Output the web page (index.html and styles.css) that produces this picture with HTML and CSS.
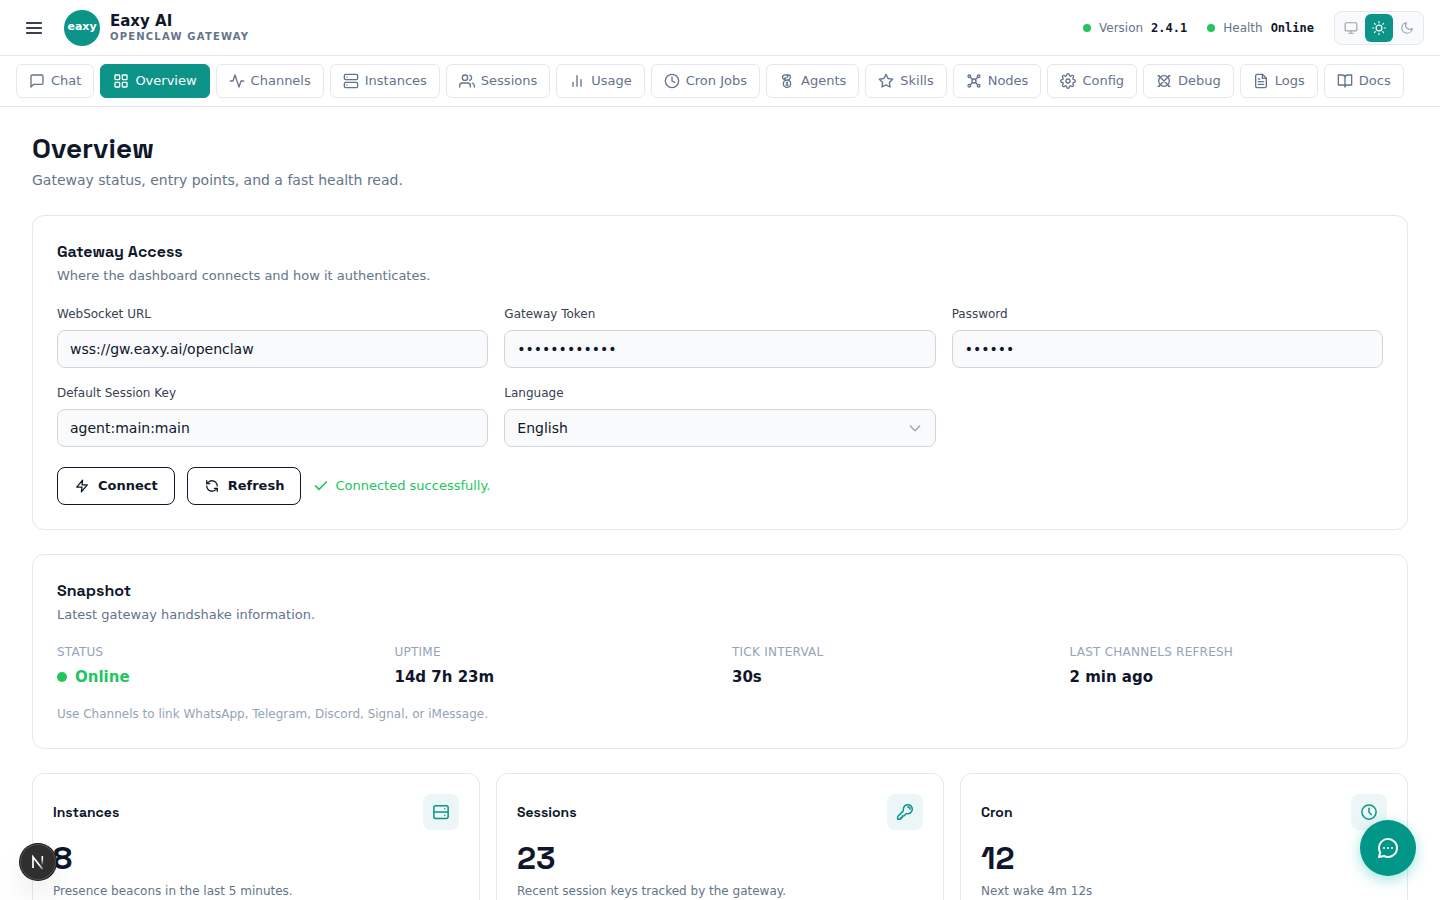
FILE: index.html
```html
<!DOCTYPE html>
<html lang="en">
<head>
    <meta charset="UTF-8">
    <meta name="viewport" content="width=device-width, initial-scale=1.0">
    <title>Eaxy AI - Overview</title>
    <link rel="stylesheet" href="styles.css">
</head>
<body>
    <header class="topbar">
        <div class="brand">
            <button class="menu-btn" type="button" aria-label="Menu">
                <svg class="icon icon-lg" viewBox="0 0 24 24"><path d="M3.500 6h17M3.500 12h17M3.500 18h17"/></svg>
            </button>
            <div class="logo">eaxy</div>
            <div>
                <div class="brand-name">Eaxy AI</div>
                <div class="brand-sub">OPENCLAW GATEWAY</div>
            </div>
        </div>
        <div class="topbar-right">
            <div class="pill"><span class="dot"></span>Version <b>2.4.1</b></div>
            <div class="pill"><span class="dot"></span>Health <b>Online</b></div>
            <div class="theme">
                <button type="button" aria-label="System theme"><svg class="icon icon-sm" viewBox="0 0 24 24"><rect x="2" y="3" width="20" height="14" rx="2"/><path d="M8 21h8M12 17v4"/></svg></button>
                <button type="button" class="active" aria-label="Light theme"><svg class="icon icon-sm" viewBox="0 0 24 24"><circle cx="12" cy="12" r="5"/><path d="M12 1v2M12 21v2M4.220 4.220l1.420 1.420M18.360 18.360l1.420 1.420M1 12h2M21 12h2M4.220 19.780l1.420-1.420M18.360 5.640l1.420-1.420"/></svg></button>
                <button type="button" aria-label="Dark theme"><svg class="icon icon-sm" viewBox="0 0 24 24"><path d="M21 12.790A9 9 0 1 1 11.210 3 7 7 0 0 0 21 12.790z"/></svg></button>
            </div>
        </div>
    </header>

    <nav class="tabs">
        <a href="#chat"><svg class="icon" viewBox="0 0 24 24"><path d="M21 15a2 2 0 0 1-2 2H7l-4 4V5a2 2 0 0 1 2-2h14a2 2 0 0 1 2 2z"/></svg>Chat</a>
        <a href="#overview" class="active"><svg class="icon" viewBox="0 0 24 24"><rect x="3" y="3" width="7" height="7" rx="1"/><rect x="14" y="3" width="7" height="7" rx="1"/><rect x="14" y="14" width="7" height="7" rx="1"/><rect x="3" y="14" width="7" height="7" rx="1"/></svg>Overview</a>
        <a href="#channels"><svg class="icon" viewBox="0 0 24 24"><path d="M22 12h-4l-3 9L9 3l-3 9H2"/></svg>Channels</a>
        <a href="#instances"><svg class="icon" viewBox="0 0 24 24"><rect x="2" y="2" width="20" height="8" rx="2"/><rect x="2" y="14" width="20" height="8" rx="2"/><path d="M6 6h.01M6 18h.01"/></svg>Instances</a>
        <a href="#sessions"><svg class="icon" viewBox="0 0 24 24"><path d="M17 21v-2a4 4 0 0 0-4-4H5a4 4 0 0 0-4 4v2"/><circle cx="9" cy="7" r="4"/><path d="M23 21v-2a4 4 0 0 0-3-3.870M16 3.130a4 4 0 0 1 0 7.750"/></svg>Sessions</a>
        <a href="#usage"><svg class="icon" viewBox="0 0 24 24"><path d="M18 20V10M12 20V4M6 20v-6"/></svg>Usage</a>
        <a href="#cron"><svg class="icon" viewBox="0 0 24 24"><circle cx="12" cy="12" r="10"/><path d="M12 6v6l4 2"/></svg>Cron Jobs</a>
        <a href="#agents"><svg class="icon" viewBox="0 0 24 24"><path d="M9 9.500H8A3 3 0 0 1 6.500 4 3 3 0 0 1 10 3h4a3 3 0 0 1 2.500 5L14.500 10.500"/><path d="M10.500 6.500a2 2 0 0 1-3 1.500M13 3.500v3"/><circle cx="12" cy="16" r="5.500"/><path d="M11 14h2M12 14v4M10.500 18h3"/></svg>Agents</a>
        <a href="#skills"><svg class="icon" viewBox="0 0 24 24"><path d="M12 2l3.090 6.260L22 9.270l-5 4.870 1.180 6.880L12 17.770l-6.180 3.250L7 14.140 2 9.270l6.910-1.010z"/></svg>Skills</a>
        <a href="#nodes"><svg class="icon" viewBox="0 0 24 24"><circle cx="5" cy="5" r="2"/><circle cx="19" cy="5" r="2"/><circle cx="5" cy="19" r="2"/><circle cx="19" cy="19" r="2"/><circle cx="12" cy="12" r="3"/><path d="M6.500 6.500l3.300 3.300M17.500 6.500l-3.300 3.300M6.500 17.500l3.300-3.300M17.500 17.500l-3.300-3.300"/></svg>Nodes</a>
        <a href="#config"><svg class="icon" viewBox="0 0 24 24"><circle cx="12" cy="12" r="3"/><path d="M19.400 15a1.650 1.650 0 0 0 .33 1.820l.06.06a2 2 0 1 1-2.830 2.830l-.06-.06a1.650 1.650 0 0 0-2.800 1.180V21a2 2 0 0 1-4 0v-.09a1.650 1.650 0 0 0-2.900-1.200l-.06.06a2 2 0 1 1-2.830-2.830l.06-.06A1.650 1.650 0 0 0 3.090 14H3a2 2 0 0 1 0-4h.09a1.650 1.650 0 0 0 1.200-2.900l-.06-.06a2 2 0 1 1 2.830-2.830l.06.06A1.650 1.650 0 0 0 10 3.090V3a2 2 0 0 1 4 0v.09a1.650 1.650 0 0 0 2.900 1.200l.06-.06a2 2 0 1 1 2.830 2.830l-.06.06A1.650 1.650 0 0 0 20.910 10H21a2 2 0 0 1 0 4h-.09a1.650 1.650 0 0 0-1.510 1z"/></svg>Config</a>
        <a href="#debug"><svg class="icon" viewBox="0 0 24 24"><circle cx="12" cy="12" r="8"/><path d="M4 4l16 16M20 4L4 20M3 4h2M19 4h2M3 20h2M19 20h2"/></svg>Debug</a>
        <a href="#logs"><svg class="icon" viewBox="0 0 24 24"><path d="M14 2H6a2 2 0 0 0-2 2v16a2 2 0 0 0 2 2h12a2 2 0 0 0 2-2V8z"/><path d="M14 2v6h6M16 13H8M16 17H8M10 9H8"/></svg>Logs</a>
        <a href="#docs"><svg class="icon" viewBox="0 0 24 24"><path d="M2 3h6a4 4 0 0 1 4 4v14a3 3 0 0 0-3-3H2zM22 3h-6a4 4 0 0 0-4 4v14a3 3 0 0 1 3-3h7z"/></svg>Docs</a>
    </nav>

    <main>
        <h1>Overview</h1>
        <p class="lead">Gateway status, entry points, and a fast health read.</p>

        <section class="card">
            <h2>Gateway Access</h2>
            <p class="card-sub">Where the dashboard connects and how it authenticates.</p>
            <form>
                <div class="fields">
                    <div class="field">
                        <label for="ws">WebSocket URL</label>
                        <input id="ws" type="text" value="wss://gw.eaxy.ai/openclaw">
                    </div>
                    <div class="field">
                        <label for="token">Gateway Token</label>
                        <input id="token" type="password" value="tokentokenab" autocomplete="off">
                    </div>
                    <div class="field">
                        <label for="password">Password</label>
                        <input id="password" type="password" value="secret" autocomplete="off">
                    </div>
                    <div class="field">
                        <label for="session">Default Session Key</label>
                        <input id="session" type="text" value="agent:main:main">
                    </div>
                    <div class="field">
                        <label for="lang">Language</label>
                        <div class="select">
                            <select id="lang"><option>English</option></select>
                            <svg class="icon" viewBox="0 0 24 24"><path d="M5 9l7 7 7-7"/></svg>
                        </div>
                    </div>
                </div>
                <div class="actions">
                    <button class="btn" type="button"><svg class="icon icon-sm" viewBox="0 0 24 24"><path d="M13 2L3 14h9l-1 8 10-12h-9z"/></svg>Connect</button>
                    <button class="btn" type="button"><svg class="icon icon-sm" viewBox="0 0 24 24"><path d="M21 12a9 9 0 0 0-9-9 9.750 9.750 0 0 0-6.740 2.740L3 8"/><path d="M3 3v5h5M3 12a9 9 0 0 0 9 9 9.750 9.750 0 0 0 6.740-2.740L21 16"/><path d="M16 16h5v5"/></svg>Refresh</button>
                    <span class="success"><svg class="icon" viewBox="0 0 24 24"><path d="M20 6L9 17l-5-5"/></svg>Connected successfully.</span>
                </div>
            </form>
        </section>

        <section class="card">
            <h2>Snapshot</h2>
            <p class="card-sub">Latest gateway handshake information.</p>
            <dl class="stats">
                <div><dt>STATUS</dt><dd class="online"><span class="dot"></span>Online</dd></div>
                <div><dt>UPTIME</dt><dd>14d 7h 23m</dd></div>
                <div><dt>TICK INTERVAL</dt><dd>30s</dd></div>
                <div><dt>LAST CHANNELS REFRESH</dt><dd>2 min ago</dd></div>
            </dl>
            <p class="hint">Use Channels to link WhatsApp, Telegram, Discord, Signal, or iMessage.</p>
        </section>

        <div class="tiles">
            <section class="tile">
                <div class="tile-head">
                    <h3>Instances</h3>
                    <span class="tile-icon"><svg class="icon" viewBox="0 0 24 24"><rect x="2.500" y="3.500" width="19" height="17" rx="2.500"/><path d="M2.500 12h19M17 7.500h.01M17 16.500h.01"/></svg></span>
                </div>
                <div class="number">8</div>
                <p>Presence beacons in the last 5 minutes.</p>
            </section>
            <section class="tile">
                <div class="tile-head">
                    <h3>Sessions</h3>
                    <span class="tile-icon"><svg class="icon" viewBox="0 0 24 24"><path d="M15.750 5.250a3 3 0 0 1 3 3m3 0a6 6 0 0 1-7.029 5.912c-.563-.097-1.159.026-1.563.430L10.500 17.250H8.250v2.250H6v2.250H2.250v-2.818c0-.597.237-1.170.659-1.591l6.499-6.499c.404-.404.527-1 .430-1.563A6 6 0 1 1 21.750 8.250z"/></svg></span>
                </div>
                <div class="number">23</div>
                <p>Recent session keys tracked by the gateway.</p>
            </section>
            <section class="tile">
                <div class="tile-head">
                    <h3>Cron</h3>
                    <span class="tile-icon"><svg class="icon" viewBox="0 0 24 24"><circle cx="12" cy="12" r="9.500"/><path d="M12 7v5l3 3.500"/></svg></span>
                </div>
                <div class="number">12</div>
                <p>Next wake 4m 12s</p>
            </section>
        </div>
    </main>

    <button class="dev-badge" type="button" aria-label="Dev tools">
        <svg viewBox="0 0 36 36">
            <defs>
                <linearGradient id="fade" x1="0" y1="0" x2="0" y2="1"><stop offset="0.3" stop-color="#fff"/><stop offset="1" stop-color="#fff" stop-opacity="0.1"/></linearGradient>
                <linearGradient id="fade2" gradientUnits="userSpaceOnUse" x1="12" y1="12" x2="24" y2="26"><stop offset="0.6" stop-color="#fff"/><stop offset="1" stop-color="#fff" stop-opacity="0.3"/></linearGradient>
            </defs>
            <path d="M13 24V13l9.500 12" fill="none" stroke="url(#fade2)" stroke-width="1.700"/>
            <rect x="21.500" y="12" width="1.600" height="9" fill="url(#fade)"/>
        </svg>
    </button>
    <button class="chat-fab" type="button" aria-label="Open chat">
        <svg class="icon" viewBox="0 0 24 24"><path d="M3 21l1.200-4.600A9 9 0 1 1 8 20z"/><path d="M8 12h.01M12 12h.01M16 12h.01"/></svg>
    </button>
</body>
</html>
```
FILE: styles.css
```css
* {
    box-sizing: border-box;
    margin: 0;
    padding: 0;
}

body {
    font-family: "DejaVu Sans", sans-serif;
    font-size: 13px;
    line-height: 20px;
    color: #0f172a;
    background: #fff;
}

button,
input,
select {
    font: inherit;
    color: inherit;
}

button {
    border: none;
    background: none;
    cursor: pointer;
}

/* Icons */
.icon {
    width: 16px;
    height: 16px;
    flex: none;
    fill: none;
    stroke: currentColor;
    stroke-width: 2;
    stroke-linecap: round;
    stroke-linejoin: round;
}

.icon-sm {
    width: 14px;
    height: 14px;
}

.icon-lg {
    width: 20px;
    height: 20px;
    stroke-width: 2.4;
}

/* Header */
.topbar {
    display: flex;
    align-items: center;
    justify-content: space-between;
    height: 56px;
    padding: 0 16px;
    border-bottom: 1px solid #e5e7eb;
}

.brand {
    display: flex;
    align-items: center;
    gap: 10px;
}

.menu-btn {
    display: flex;
    align-items: center;
    justify-content: center;
    width: 36px;
    height: 36px;
    margin-right: 2px;
    color: #374151;
}

.logo {
    width: 36px;
    height: 36px;
    border-radius: 50%;
    background: #0d9488;
    color: #fff;
    font-size: 11px;
    font-weight: bold;
    line-height: 34px;
    text-align: center;
}

.brand-name {
    font-size: 15px;
    font-weight: bold;
    line-height: 18px;
}

.brand-sub {
    font-size: 10px;
    font-weight: bold;
    line-height: 14px;
    letter-spacing: 0.12em;
    color: #64748b;
}

.topbar-right {
    display: flex;
    align-items: center;
    gap: 20px;
}

.pill {
    display: flex;
    align-items: center;
    gap: 8px;
    font-size: 12px;
    color: #64748b;
}

.pill b {
    font-family: "DejaVu Sans Mono", monospace;
    color: #0f172a;
}

.dot {
    width: 8px;
    height: 8px;
    border-radius: 50%;
    background: #22c55e;
}

.theme {
    display: flex;
    padding: 2px;
    border: 1px solid #e5e7eb;
    border-radius: 8px;
    background: #f8fafc;
}

.theme button {
    display: flex;
    align-items: center;
    justify-content: center;
    width: 28px;
    height: 28px;
    border-radius: 6px;
    color: #9ca3af;
}

.theme .active {
    background: #0d9488;
    color: #fff;
}

/* Navigation */
.tabs {
    display: flex;
    gap: 6px;
    padding: 8px 16px;
    border-bottom: 1px solid #e5e7eb;
    overflow: hidden;
}

.tabs a {
    display: flex;
    align-items: center;
    gap: 6px;
    height: 34px;
    padding: 0 12px;
    border: 1px solid #e5e7eb;
    border-radius: 6px;
    color: #64748b;
    text-decoration: none;
    white-space: nowrap;
}

.tabs .active {
    background: #0d9488;
    border-color: #0d9488;
    color: #fff;
}

/* Page */
main {
    padding: 24px 32px;
}

h1,
h2,
h3,
.number {
    font-family: "Space Grotesk", Inter, sans-serif;
    font-weight: 700;
}

h1 {
    font-size: 28px;
    line-height: 34px;
}

.lead {
    margin: 4px 0 24px;
    font-size: 14px;
    line-height: 22px;
    color: #64748b;
}

.card {
    padding: 24px;
    margin-bottom: 24px;
    border: 1px solid #e2e8f0;
    border-radius: 12px;
}

h2 {
    font-size: 16px;
    line-height: 23px;
}

.card-sub {
    margin: 3px 0 19px;
    color: #64748b;
}

/* Form */
.fields {
    display: grid;
    grid-template-columns: repeat(3, 1fr);
    gap: 16px;
}

.field label {
    display: block;
    margin-bottom: 6px;
    font-size: 12px;
    line-height: 19px;
    color: #374151;
}

.field input,
.field select {
    display: block;
    width: 100%;
    height: 38px;
    padding: 0 12px;
    border: 1px solid #d1d5db;
    border-radius: 8px;
    background: #f8fafc;
    font-size: 14px;
    appearance: none;
}

.select {
    position: relative;
}

.select .icon {
    position: absolute;
    top: 11px;
    right: 13px;
    color: #9ca3af;
    pointer-events: none;
}

.actions {
    display: flex;
    align-items: center;
    gap: 12px;
    margin-top: 20px;
}

.btn {
    display: flex;
    align-items: center;
    gap: 8px;
    height: 38px;
    padding: 0 16px;
    border: 1px solid #0f172a;
    border-radius: 8px;
    font-weight: bold;
}

.btn .icon {
    margin: 0 1px;
    stroke-width: 2.2;
}

.success {
    display: flex;
    align-items: center;
    gap: 6px;
    color: #22c55e;
}

.success .icon {
    stroke-width: 2.5;
}

/* Snapshot */
.stats {
    display: grid;
    grid-template-columns: repeat(4, 1fr);
    gap: 24px;
}

.stats dt {
    font-size: 12px;
    line-height: 16px;
    letter-spacing: 0.02em;
    color: #94a3b8;
}

.stats dd {
    margin-top: 6px;
    font-size: 15px;
    font-weight: bold;
    line-height: 22px;
}

.stats .online {
    display: flex;
    align-items: center;
    gap: 8px;
    color: #22c55e;
}

.stats .dot {
    width: 10px;
    height: 10px;
}

.hint {
    margin-top: 16px;
    font-size: 12px;
    color: #94a3b8;
}

/* Tiles */
.tiles {
    display: grid;
    grid-template-columns: repeat(3, 1fr);
    gap: 16px;
}

.tile {
    padding: 20px;
    border: 1px solid #e2e8f0;
    border-radius: 12px;
}

.tile-head {
    display: flex;
    align-items: center;
    justify-content: space-between;
}

h3 {
    font-size: 14px;
}

.tile-icon {
    display: flex;
    align-items: center;
    justify-content: center;
    width: 36px;
    height: 36px;
    border-radius: 8px;
    background: #ecf6f6;
    color: #0d9488;
}

.tile-icon .icon {
    width: 18px;
    height: 18px;
}

.number {
    margin-top: 10px;
    font-size: 32px;
    line-height: 36px;
}

.tile p {
    margin-top: 5px;
    font-size: 12px;
    color: #64748b;
}

/* Floating buttons */
.dev-badge {
    position: fixed;
    left: 20px;
    bottom: 20px;
    width: 36px;
    height: 36px;
    border-radius: 50%;
    background: #2f2f2f;
    box-shadow: inset 0 0 0 1px #505050, 0 0 0 1px #171717, 0 16px 32px -8px rgba(0, 0, 0, 0.24);
}

.dev-badge svg {
    display: block;
}

.chat-fab {
    position: fixed;
    right: 24px;
    bottom: 24px;
    display: flex;
    align-items: center;
    justify-content: center;
    width: 56px;
    height: 56px;
    border-radius: 50%;
    background: #009688;
    color: #fff;
    box-shadow: 0 4px 14px rgba(20, 184, 166, 0.4);
}

.chat-fab .icon {
    width: 24px;
    height: 24px;
}
```
